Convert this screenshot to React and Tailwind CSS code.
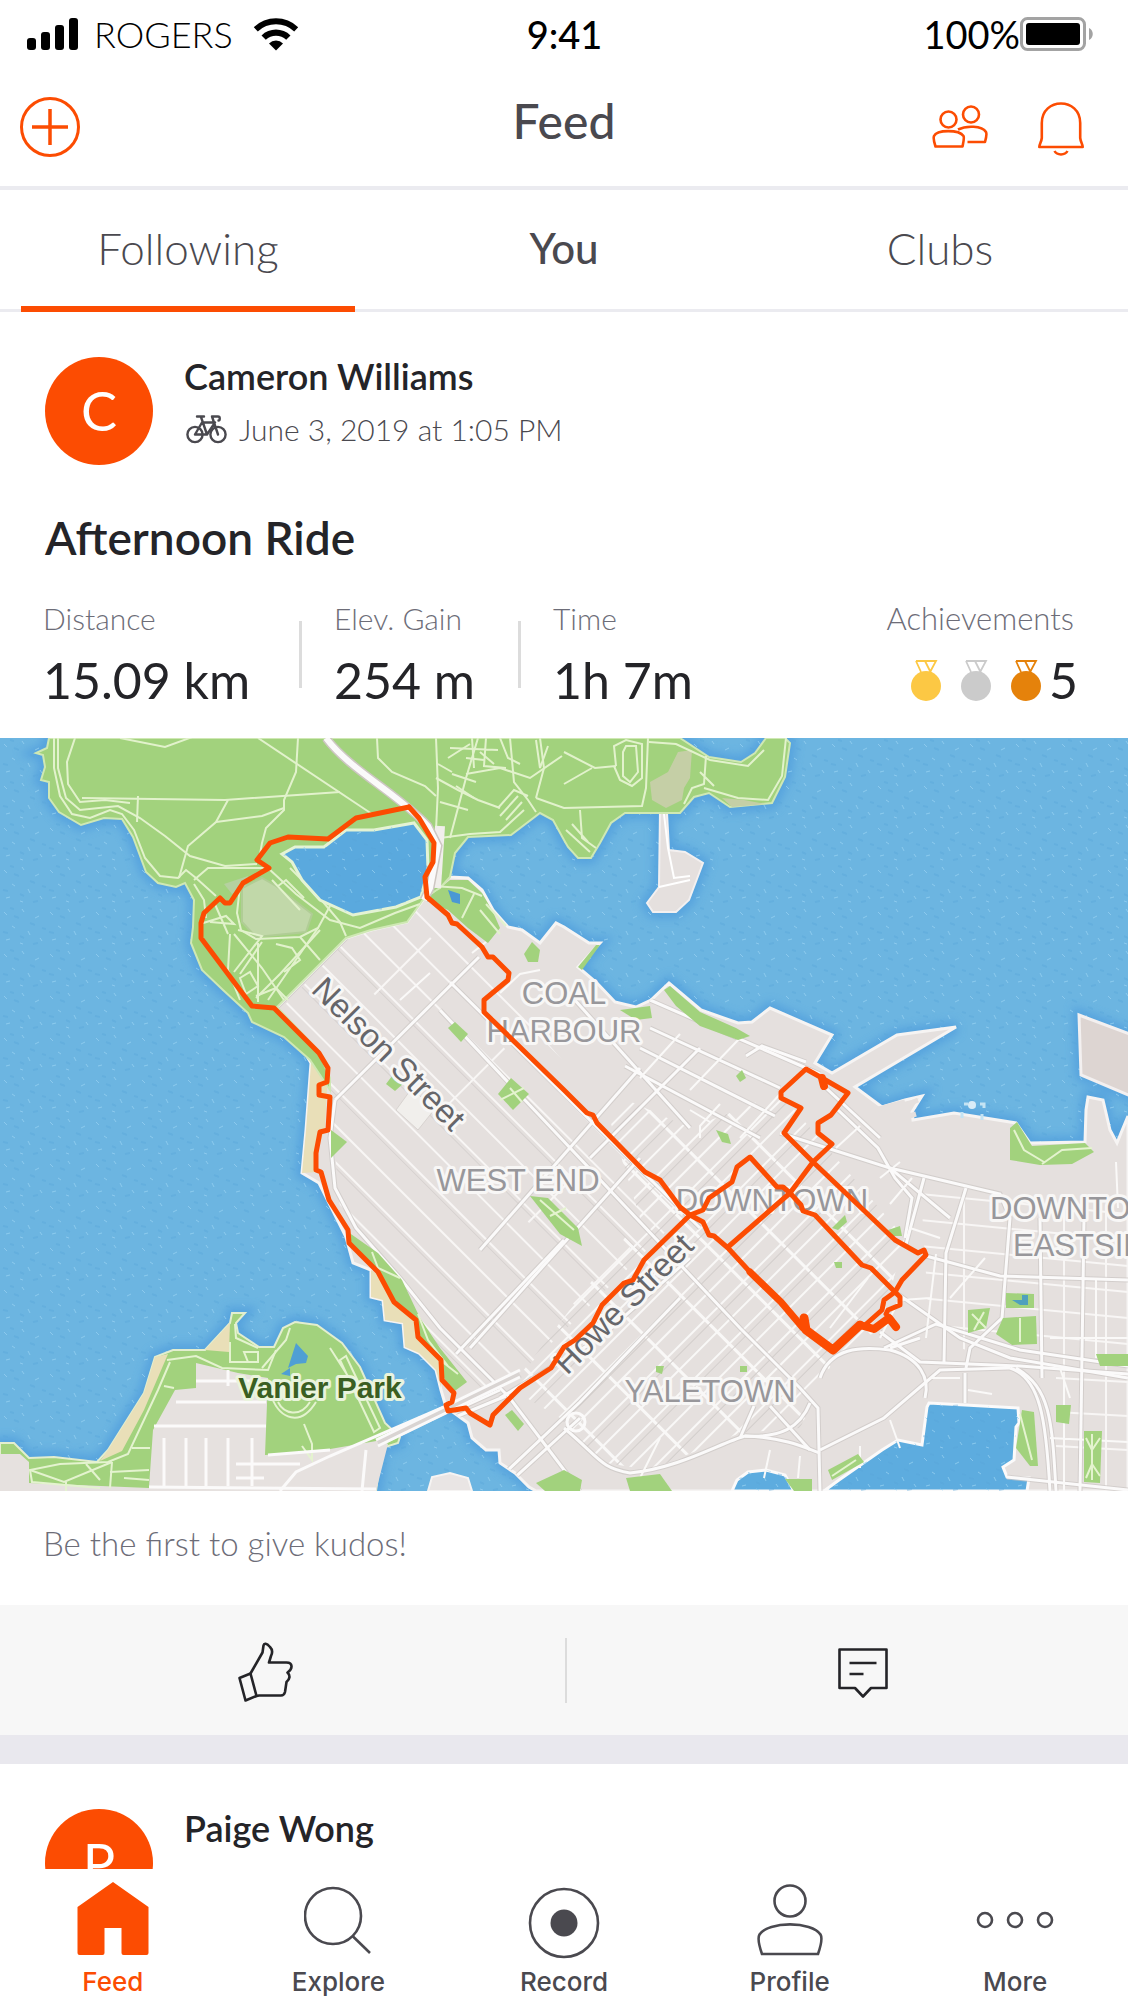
import React from "react";

const LATO = "font-[Lato,'Open_Sans',sans-serif]";
const INTER = "font-[Inter,Roboto,sans-serif]";

/* ---------- map data ---------- */

const DOWNTOWN_LAND =
  "346,200 371,192 407,184 425,159 432,135 450,139 468,140 482,152 493,172 508,189 522,192 540,205 556,185 564,189 589,205 600,205 578,229 597,245 615,264 636,269 651,262 669,245 701,272 738,285 752,284 770,270 832,297 815,325 832,335 897,297 956,289 855,349 882,369 905,362 922,358 912,374 913,382 954,375 1016,385 1030,405 1085,404 1086,372 1088,359 1103,362 1110,392 1117,405 1121,395 1128,378 1128,753 536,753 529,749 515,735 500,725 499,712 486,712 472,700 468,685 446,669 441,652 436,632 419,615 405,609 403,585 385,582 383,562 371,559 371,532 353,525 346,499 331,469 319,445 302,435 306,392 311,325 277,269";

const STANLEY_PARK =
  "M49,0 L47,10 36,15 43,17 45,29 41,42 49,44 49,60 59,74 81,87 104,80 122,81 133,99 139,115 146,134 158,145 176,149 185,145 194,162 193,189 191,205 202,232 223,252 248,275 252,284 284,299 310,322 330,352 330,340 318,312 277,269 346,200 371,192 407,184 425,159 440,150 450,139 455,115 468,99 511,97 540,75 553,82 564,102 568,109 578,120 591,120 600,105 611,85 625,75 680,75 694,59 709,55 730,69 772,65 785,39 790,5 785,0 766,0 755,15 741,24 709,19 680,0Z";

const LAGOON =
  "M282,116 L295,109 324,109 346,92 374,92 414,85 427,102 428,132 421,159 396,169 353,177 320,162 302,142 292,124Z";

const PIER_ISLAND =
  "660,72 667,75 669,112 685,114 703,125 689,162 676,174 653,174 647,165 659,149";

const VANIER_LAND =
  "M0,705 L14,705 29,720 54,719 97,724 108,712 144,655 155,619 173,612 205,612 230,585 232,575 245,575 236,585 238,595 259,609 274,609 283,590 295,584 317,587 342,605 360,629 385,685 400,699 398,705 382,710 376,753 0,753Z";

const FALSE_CREEK = [
  "M732,753 L737,742 748,734 766,732 785,737 794,753Z",
  "M824,753 L839,742 882,712 898,702 922,707 927,669 929,665 965,667 1018,670 1019,685 1016,689 1014,722 1003,729 1007,739 1029,740 1027,753Z",
];

const GREENS = [
  "425,162 450,142 468,142 482,155 493,174 500,190 488,205 468,190 448,172",
  "524,216 532,204 540,212 538,224 528,224",
  "578,229 596,207 600,207 582,232",
  "664,252 670,248 700,274 736,290 750,298 738,302 700,288 676,268",
  "620,272 650,268 652,280 636,282",
  "448,290 455,284 468,296 461,304",
  "498,356 511,340 529,356 513,372",
  "386,346 392,338 404,345 395,353",
  "530,458 548,460 578,490 582,508 560,496",
  "331,392 347,404 331,420",
  "348,494 378,515 402,542 420,580 440,610 467,644 452,655 443,638 441,620 418,597 414,582 394,564 378,534 350,506",
  "505,677 512,672 524,686 518,693",
  "832,490 845,477 847,484 838,492",
  "716,392 728,396 731,406 722,404",
  "1010,390 1017,384 1032,408 1085,405 1094,414 1072,426 1040,427 1010,422",
  "968,572 990,570 986,590 968,595",
  "1006,555 1034,556 1034,570 1006,570",
  "1003,580 1036,578 1037,606 1012,607 996,596",
  "1056,667 1071,667 1069,686 1056,684",
  "1022,672 1034,674 1038,728 1030,728 1016,710",
  "1084,693 1102,693 1100,745 1084,744",
  "828,732 858,716 864,724 832,742",
  "626,740 660,736 672,753 630,753",
  "785,741 812,741 812,753 794,753",
  "536,745 564,732 582,742 580,753 545,753",
  "656,628 664,628 662,636 656,634",
  "740,628 747,628 747,634 740,634",
  "1096,616 1128,616 1128,628 1100,628",
  "736,338 742,332 746,340 740,344",
  "888,492 900,488 902,498 892,498",
  "834,524 842,524 842,530 836,530",
];

const BEACHES = [
  "311,325 319,333 327,350 325,390 317,414 317,434 302,435 306,392",
  "371,532 378,537 394,566 416,584 418,600 440,624 441,650 436,632 419,615 405,609 403,585 385,582 383,562 371,559",
  "155,619 168,616 144,672 122,713 100,723 108,712 144,655",
  "205,612 230,585 229,614",
];

const TRAILS = [
  "M54,0 L54,30 60,58 72,76 90,80 110,72 122,76 134,92 145,120 160,138 178,140 186,132 196,140 216,158",
  "M58,0 L58,30 66,60 80,72 118,68 140,80 165,98 190,118 225,128 257,126",
  "M75,0 L67,24 68,46 80,64 105,62 130,65",
  "M82,60 L225,62 340,54",
  "M138,58 L137,84",
  "M228,62 L216,84 188,108 179,140",
  "M258,0 L372,76",
  "M298,0 L296,34 284,62 284,72 266,90 262,105 259,122",
  "M216,84 L262,78 284,70",
  "M120,0 L165,9 195,-2",
  "M194,142 L208,130 268,130",
  "M194,146 L204,162 206,180",
  "M240,148 L237,175 241,192 256,201 300,199 318,190 330,168",
  "M268,130 L296,156 330,182 360,190 395,175 420,166",
  "M272,142 L300,172 M278,148 L286,142 304,160",
  "M290,130 L318,158 340,184 346,198",
  "M200,186 L226,178 234,186 210,184 M214,164 L228,196",
  "M230,196 L228,232 240,262 M234,196 L262,230 284,262",
  "M238,192 L262,198 234,234 M262,204 L240,236",
  "M258,205 L258,264 M300,199 L320,222 M320,192 L280,236 256,260",
  "M318,190 L268,262 M276,206 L292,210 300,222 284,234",
  "M240,240 L250,234 258,248 246,256Z",
  "M256,258 L276,250 288,262",
  "M377,0 L378,20 392,34 425,48 436,58",
  "M436,0 L438,50 436,92 M448,20 L470,6 M438,26 L452,34",
  "M450,100 L466,40 478,0 M466,36 L500,30 530,40 562,18",
  "M436,40 L458,52 478,62 500,70 M440,64 L468,72",
  "M450,10 L498,12 M486,0 L484,28 506,30 M500,0 L508,20 520,26",
  "M472,0 L474,30 M480,14 L494,26 M452,36 L476,44 M456,48 L474,60 M466,20 L484,22",
  "M510,0 L514,44 528,62 536,74 M498,70 L514,52 528,58",
  "M500,78 L518,58 M506,82 L522,64 M536,2 L540,30 548,8",
  "M440,100 L470,96 500,94 524,72 M536,60 L544,30 540,0",
  "M564,14 L595,30 616,28 M564,46 L592,30",
  "M616,28 L614,8 626,2 642,6 642,40 632,48 620,42 614,28",
  "M626,8 L636,8 638,34 630,44 623,38 623,14Z",
  "M648,0 L646,50 642,68 564,70 536,60",
  "M649,4 L676,6 710,22 748,28 764,12",
  "M684,66 L692,50 704,46 706,18 M700,34 L714,48 M704,50 L738,60 768,62 782,38 786,0",
  "M580,72 L582,100 596,110 M566,92 L590,114 M572,86 L588,104",
  "M433,148 L462,150 482,158 M462,180 L474,156 M480,172 L500,196 M486,166 L506,188",
];

const VANIER_PATHS = [
  "M167,622 L196,618 222,630 268,632 276,612",
  "M170,624 L158,652 128,716 108,724 60,726 30,732 32,744 100,750",
  "M235,586 L236,600 258,610 M230,604 L230,624 258,624",
  "M244,614 L258,614 258,624 248,624Z",
  "M262,630 L286,602 290,590",
  "M340,622 L346,618 380,690 374,694Z M330,610 L362,660",
  "M272,660 C280,680 300,690 316,664 M278,664 C284,676 300,680 310,664",
  "M304,686 L312,706 312,722 302,708",
  "M30,732 L64,744 112,724 M66,744 L66,753 M112,724 L110,750 M86,726 L100,742",
  "M110,734 L149,732 M124,740 L149,742 M132,710 L150,710 M164,648 L174,650",
];

const VANIER_STREETS = [
  "M196,643 H264 M176,664 H266 M154,688 H266",
  "M164,700 V748 M186,700 V748 M206,700 V748 M228,700 V748 M252,700 V748 M228,632 V648",
  "M149,749 L376,751 M236,726 H300 M236,740 H264 M268,717 L330,712",
  "M280,753 L296,734 330,718 520,636 M366,712 L362,753",
];

const MAIN_STREETS = [
  "M479,219 L335,362", "M335,362 L330,400 335,450 356,490 400,540 440,590 506,656",
  "M640,330 L480,512", "M564,502 L456,616", "M640,420 L470,610",
  "M700,310 L590,420", "M346,200 L277,269",
  "M440,272 L740,590 800,650 818,670 820,753",
  "M450,244 L600,392 700,490", "M564,250 L690,390",
  "M650,290 L780,350", "M640,310 L775,378", "M625,328 L760,400",
  "M650,262 L820,336", "M746,318 L762,308 806,324",
  "M500,660 L600,600 690,520",
  "M382,706 L500,652 M376,712 L506,658",
  "M486,753 L580,664 680,560", "M500,753 L580,680 M506,655 L580,753",
  "M564,690 C600,720 600,730 630,735 C680,730 720,705 745,698 C790,700 810,712 820,715",
  "M745,698 C780,700 800,690 810,665", "M770,668 L810,712", "M754,668 L740,700",
  "M820,712 L884,680 940,632 1010,630",
  "M820,640 C830,610 860,608 890,612 C920,620 930,640 925,660",
  "M880,594 L920,624 1020,628 1128,636", "M884,610 L936,586 1020,612 1128,628",
  "M895,554 L960,600 1010,620 1128,640",
  "M890,430 L1000,456 1010,480 1002,580 970,610 966,630",
  "M926,518 L1000,538 1128,542", "M920,600 L890,610",
  "M780,395 L890,430 950,480", "M1010,630 C1040,640 1046,680 1050,753",
  "M1016,630 C1050,650 1052,680 1056,753", "M1084,480 L1080,753", "M1040,480 L1042,640",
  "M838,372 L878,410 895,440 912,460 905,500",
  "M924,440 L905,510 M966,450 L946,515 944,625",
  "M826,350 L880,400", "M1007,739 L1128,752", "M965,635 L965,665",
];

const SIDE_STREETS = [
  "M740,300 L690,352 M790,345 L740,400 M680,296 L640,340 M720,366 L700,388 700,400 M710,384 L690,372",
  "M900,424 L880,440 M912,440 L890,466 M860,388 L836,410 M900,560 L880,600 M910,490 L940,500",
  "M936,516 L926,600 M985,520 L950,560 M902,562 L930,560 M868,540 L830,590",
  "M890,682 L900,710 M930,640 L960,640 M1060,630 L1070,660 M968,652 L992,656",
  "M770,712 L764,740 M800,718 L798,740 M860,708 L860,730 M640,740 L660,700",
  "M1064,640 V753 M1050,600 H1128 M1050,700 L1128,704 M1096,542 V620 M1116,424 L1118,470",
  "M430,235 L400,262 M500,255 L520,236 540,232 M472,215 L486,204",
];

const ROUTE_MAIN =
  "M409,69 L356,80 328,101 288,99 270,105 257,122 269,130 243,145 230,165 225,165 220,160 204,175 201,185 201,200 252,268 274,270 319,315 328,330 327,344 319,347 319,357 330,359 328,392 320,394 316,415 316,432 321,434 329,462 348,492 349,505 378,534 394,564 416,582 418,599 441,622 442,642 454,655 452,664 446,667 448,673 466,670 470,675 490,687 493,677 520,650 551,630 564,609 575,602 593,585 602,567 624,545 633,542 644,522 690,477 703,472 709,460 732,444 737,429 750,419 777,449 783,449 790,455 801,467 803,473 815,477 862,527 871,530 895,554 900,559 900,567 888,572 886,576";
const ROUTE_EAST =
  "M409,69 L419,80 434,105 433,124 425,139 427,159 448,177 452,185 457,186 482,209 488,219 493,219 509,235 508,242 484,262 484,274 564,352 587,375 593,377 597,385 645,434 660,442 680,469 690,477 703,484 709,497 714,498 728,510 750,534 781,564 803,590";
const ROUTE_LOOP =
  "M895,554 L902,542 926,517 924,512 918,515 895,502 813,424 784,395 801,370 781,360 781,354 806,331 822,340 848,355 831,377 818,385 818,395 832,406 813,424 790,455 728,509 M895,554 L884,562 882,572 864,588";

const AREA_LABELS = [
  { text: "COAL", x: 564, y: 266, anchor: "middle" },
  { text: "HARBOUR", x: 564, y: 304, anchor: "middle" },
  { text: "WEST END", x: 518, y: 453, anchor: "middle" },
  { text: "DOWNTOWN", x: 772, y: 473, anchor: "middle" },
  { text: "YALETOWN", x: 710, y: 664, anchor: "middle" },
  { text: "DOWNTOWN", x: 990, y: 481, anchor: "start" },
  { text: "EASTSIDE", x: 1013, y: 518, anchor: "start" },
];

const range = (from, to, step) => {
  const out = [];
  for (let v = from; v <= to; v += step) out.push(v);
  return out;
};

function RideMap() {
  return (
    <svg
      viewBox="0 0 1128 753"
      className="block h-auto w-full"
      role="img"
      aria-label="Map of the ride through downtown Vancouver"
    >
      <defs>
        <clipPath id="land"><polygon points={DOWNTOWN_LAND} /></clipPath>
        <clipPath id="west-end">
          <polygon points="346,203 425,165 480,212 500,250 690,470 500,655 450,655 400,545 340,470 330,360 280,272" />
        </clipPath>
        <clipPath id="core">
          <polygon points="690,390 780,355 905,500 880,590 832,625 800,690 740,695 650,732 600,724 560,680 510,650 640,480 600,350" />
        </clipPath>
        <clipPath id="east">
          <polygon points="920,440 1128,470 1128,753 1060,753 1050,640 930,600" />
        </clipPath>
        <pattern id="ripples" width="46" height="42" patternUnits="userSpaceOnUse">
          <path d="M4,6 l3,3 M22,3 l2,3 M35,12 l4,-2 M12,20 l3,2 M28,25 l2,4 M6,34 l4,-1 M40,32 l2,3 M20,37 l3,1" stroke="#93cff0" strokeWidth="1" opacity="0.8" />
          <path d="M14,10 l5,2 M30,17 l5,2 M3,26 l5,1 M33,38 l5,-1 M10,2 l4,1 M42,22 l4,1 M20,30 l4,2" stroke="#57a5d8" strokeWidth="2" opacity="0.4" />
        </pattern>
        <filter id="shore" x="-5%" y="-5%" width="110%" height="110%">
          <feGaussianBlur stdDeviation="5" />
        </filter>
      </defs>

      <rect width="1128" height="753" fill="#6cb5e1" />

      {/* darker water along the shore */}
      <g filter="url(#shore)" fill="none" stroke="#4a98dc" strokeWidth="12" opacity="0.65">
        <polygon points={DOWNTOWN_LAND} />
        <path d={STANLEY_PARK} />
        <path d={VANIER_LAND} />
        <polygon points={PIER_ISLAND} />
        <polygon points="1079,277 1140,300 1140,362 1081,337" />
      </g>
      <rect width="1128" height="753" fill="url(#ripples)" />

      {/* land */}
      <polygon points={DOWNTOWN_LAND} fill="#e5e0de" stroke="#f6f4f3" strokeWidth="3" />
      <polygon points={PIER_ISLAND} fill="#e5e0de" stroke="#f3f0f0" strokeWidth="2" />
      <path d="M664,76 L668,110 674,140 690,138 M659,149 L690,142" fill="none" stroke="#fff" strokeWidth="2" />
      <polygon points="1079,277 1140,300 1140,362 1081,337" fill="#ddd5d2" stroke="#f3f0f0" strokeWidth="3" />
      <polygon points="428,753 432,739 450,735 468,740 472,753" fill="#e9e5e4" stroke="#f6f4f3" strokeWidth="2" />
      {FALSE_CREEK.map((d) => (
        <g key={d}>
          <path d={d} fill="#5dacdf" stroke="#fbfafa" strokeWidth="3" />
          <path d={d} fill="url(#ripples)" />
        </g>
      ))}

      {/* street grids */}
      <g clipPath="url(#west-end)">
        <g transform="translate(346 200) rotate(45)" stroke="#f8f6f5" strokeWidth="2">
          {range(-120, 330, 26).map((v) => <line key={v} x1="-40" y1={v} x2="620" y2={v} />)}
          {range(10, 320, 52).map((v) => <line key={v} x1="-40" y1={v + 4} x2="620" y2={v + 4} stroke="#d6d1cf" strokeWidth="1" />)}
          {[60, 190, 330, 420].map((u, i) => <line key={u} x1={u} y1={i * 26 - 60} x2={u} y2={i * 26 + 20} />)}
        </g>
      </g>
      <g clipPath="url(#core)">
        <g transform="translate(346 200) rotate(45)" stroke="#f9f8f7" strokeWidth="2">
          {range(-200, 340, 54).map((v) => <line key={v} x1="200" y1={v} x2="820" y2={v} strokeWidth="3" />)}
          {range(320, 800, 17).map((u) => <line key={u} x1={u} y1="-260" x2={u} y2="360" />)}
          {range(326, 800, 34).map((u) => <line key={u} x1={u} y1="-260" x2={u} y2="360" stroke="#d3cecc" strokeWidth="1" />)}
        </g>
      </g>
      <g clipPath="url(#east)" stroke="#f8f6f5" strokeWidth="2">
        {range(440, 600, 26).map((y) => <line key={y} x1="900" y1={y - 12} x2="1128" y2={y + 10} />)}
        {[964, 1064, 1106].map((x) => <line key={x} x1={x} y1="440" x2={x} y2="753" />)}
        {range(640, 740, 34).map((y) => <line key={y} x1="1056" y1={y} x2="1128" y2={y + 4} />)}
      </g>
      <g clipPath="url(#land)" fill="none" stroke="#cbc6c4" strokeWidth="5" opacity="0.7">
        {MAIN_STREETS.map((d) => <path key={d} d={d} />)}
      </g>
      <g clipPath="url(#land)" fill="none" stroke="#fbfafa" strokeWidth="3">
        {MAIN_STREETS.map((d) => <path key={d} d={d} />)}
        <circle cx="576" cy="684" r="9" />
      </g>
      <g clipPath="url(#land)" fill="none" stroke="#faf9f8" strokeWidth="2">
        {SIDE_STREETS.map((d) => <path key={d} d={d} />)}
      </g>
      <path d="M396,372 L412,350 434,372 418,392Z" fill="#f1efec" stroke="#d8d3d0" strokeWidth="1" />

      {/* parks and beaches */}
      {BEACHES.slice(0, 2).map((p) => <polygon key={p} points={p} fill="#e9dfb8" />)}
      {GREENS.map((p) => <polygon key={p} points={p} fill="#a2d27d" />)}
      <g fill="none" stroke="#e4f3cf" strokeWidth="2">
        <path d="M1014,392 L1024,412 1044,424 M1042,426 L1062,412 1092,410 M500,362 L524,350 M510,350 L522,364 M540,462 L574,492 M550,478 L566,470" />
        <path d="M1020,580 V604 M1020,676 L1032,722 M1092,696 V742 M1086,700 L1092,712 1100,700 M1086,740 L1092,726 1100,738 M832,738 L856,722 M972,576 L986,590 M974,592 L984,574" />
        <path d="M372,514 L378,530 400,540 M418,576 L428,602 448,628 M440,622 L458,636" />
      </g>
      <path d="M1012,562 h10 v-5 h6 v10 h-8Z" fill="#4fa0bd" />
      <path d={STANLEY_PARK} fill="#a2d27d" stroke="#cfe8b4" strokeWidth="2" />
      <path d="M652,62 L650,44 668,34 678,14 692,12 690,40 684,50 682,62 666,70Z" fill="#c5cfa6" />
      <path d="M242,150 L262,140 276,148 312,176 306,194 256,199 242,184Z" fill="#c1d8a9" stroke="#b0cd95" strokeWidth="2" />
      <path d="M224,146 L248,138 246,148 232,156Z" fill="#b5d0a0" />
      <path d="M722,60 L744,62 766,66 732,69Z" fill="#c5cfa6" />
      <g fill="none" stroke="#e2f2cc" strokeWidth="2">
        {TRAILS.map((d) => <path key={d} d={d} />)}
      </g>
      <path d={LAGOON} fill="#5aa9de" stroke="#e4f3d4" strokeWidth="3" />
      <path d={LAGOON} fill="url(#ripples)" />
      <path d="M448,152 L460,156 460,166 452,164Z" fill="#4a98d4" />
      <path d="M440,88 L436,150" fill="none" stroke="#f1eeec" strokeWidth="10" />
      <path d="M326,0 C350,32 398,56 428,88 L438,108 430,150 424,162" fill="none" stroke="#cdc6c2" strokeWidth="9" />
      <path d="M326,0 C350,32 398,56 428,88 L438,108 430,150 424,162" fill="none" stroke="#fbfafa" strokeWidth="6" />

      {/* Vanier Park */}
      <path d={VANIER_LAND} fill="#a2d27d" stroke="#e3eecf" strokeWidth="2" />
      {BEACHES.slice(2).map((p) => <polygon key={p} points={p} fill="#e9dfb8" />)}
      <path d="M196,625 L238,635 268,640 265,717 313,714 382,702 388,706 376,753 149,753 149,749 153,692 175,652 196,650Z" fill="#e6e1df" />
      <path d="M0,716 L20,716 29,724 29,745 149,750 149,753 0,753Z" fill="#e6e1df" />
      <path d="M288,630 L296,605 308,618 306,625 296,626Z M281,636 L290,630 290,638Z" fill="#4f9fd4" />
      <g fill="none" stroke="#e4f3cf" strokeWidth="2">
        {VANIER_PATHS.map((d) => <path key={d} d={d} />)}
      </g>
      <g fill="none" stroke="#fbfafa" strokeWidth="3">
        {VANIER_STREETS.map((d) => <path key={d} d={d} />)}
        <path d="M378,705 L520,636" stroke="#d9d4d2" strokeWidth="8" />
        <path d="M376,702 L520,632 M378,708 L520,639" />
      </g>

      {/* harbour piers */}
      <path d="M875,372 L905,364 M880,378 L918,362 M890,384 L916,376" stroke="#e5e0de" strokeWidth="5" fill="none" />
      <path d="M964,366 h4 M980,366 h4 v4 M962,374 v6 M982,376 v6" stroke="#c4e3f3" strokeWidth="3" fill="none" />
      <circle cx="972" cy="367" r="4" fill="#d9ecf7" />

      {/* labels */}
      <g
        fontFamily="'Liberation Sans', Arial, sans-serif"
        fontSize="31"
        fill="#98979b"
        stroke="#f8f7f6"
        strokeWidth="6"
        strokeLinejoin="round"
        paintOrder="stroke"
      >
        {AREA_LABELS.map((l) => (
          <text key={`${l.text}-${l.x}`} x={l.x} y={l.y} textAnchor={l.anchor}>{l.text}</text>
        ))}
        <g fill="#66666a" fontSize="33">
          <text transform="translate(310 253) rotate(45)">Nelson Street</text>
          <text transform="translate(567 638) rotate(-45)">Howe Street</text>
        </g>
        <text x="320" y="660" textAnchor="middle" fontSize="30" fontWeight="700" fill="#3a5f22" stroke="#eaf4dd">Vanier Park</text>
      </g>

      {/* recorded route */}
      <g fill="none" stroke="#fc4c02" strokeWidth="5" strokeLinejoin="round" strokeLinecap="round">
        <path d={ROUTE_MAIN} />
        <path d={ROUTE_EAST} />
        <path d={ROUTE_LOOP} />
        <path d="M822,340 L824,348" strokeWidth="8" />
        <path d="M750,534 L781,564 803,590" strokeWidth="7" />
        <path d="M804,580 L806,592 833,612 860,587" strokeWidth="9" />
        <path d="M860,587 L874,591 889,580 896,589" strokeWidth="8" />
      </g>
    </svg>
  );
}

/* ---------- icons ---------- */

function SignalIcon() {
  return (
    <svg width="51" height="32" viewBox="0 0 51 32" aria-hidden="true">
      <rect x="0" y="20" width="9" height="12" rx="3" />
      <rect x="14" y="14" width="9" height="18" rx="3" />
      <rect x="28" y="7" width="9" height="25" rx="3" />
      <rect x="42" y="0" width="9" height="32" rx="3" />
    </svg>
  );
}

function WifiIcon() {
  return (
    <svg width="46" height="33" viewBox="0 0 46 33" aria-hidden="true">
      <path d="M0.8,9.2 A32,32 0 0 1 45.2,9.2 L41.2,13.6 A26,26 0 0 0 4.8,13.6 Z" />
      <path d="M8.5,17.4 A21,21 0 0 1 37.5,17.4 L33.2,21.8 A15,15 0 0 0 12.8,21.8 Z" />
      <path d="M16,25.4 A10,10 0 0 1 30,25.4 L23,32.6 Z" />
    </svg>
  );
}

function BatteryIcon() {
  return (
    <svg width="74" height="34" viewBox="0 0 74 34" aria-hidden="true">
      <rect x="1.5" y="1.5" width="63" height="31" rx="6" fill="none" stroke="#a3a3a3" strokeWidth="3" />
      <rect x="6" y="6" width="54" height="22" rx="3" />
      <path d="M69,11 C74,13 74,21 69,23Z" fill="#a3a3a3" />
    </svg>
  );
}

function PlusCircleIcon() {
  return (
    <svg width="60" height="60" viewBox="0 0 60 60" fill="none" stroke="#fc4c02" strokeWidth="3" aria-hidden="true">
      <circle cx="30" cy="30" r="28.5" />
      <path d="M30,12 V48 M12,30 H48" strokeWidth="3.5" />
    </svg>
  );
}

function PeopleIcon() {
  return (
    <svg width="56" height="44" viewBox="0 0 56 44" fill="none" stroke="#fc4c02" strokeWidth="2.6" strokeLinejoin="round" aria-hidden="true">
      <circle cx="16.5" cy="14.5" r="8" />
      <circle cx="39" cy="9.5" r="8" />
      <path d="M3.5,41.5 C2,37 1.2,33 2,31 C5,24.5 27,24.5 31.5,31 C32.5,33 31.5,37 30.5,41.5 Z" />
      <path d="M26,24.5 C34,20.5 50,20.5 54,27 C55,29 54,33.5 53,37 H35.5" />
    </svg>
  );
}

function BellIcon() {
  return (
    <svg width="46" height="54" viewBox="0 0 46 54" fill="none" stroke="#fc4c02" strokeWidth="2.6" strokeLinejoin="round" aria-hidden="true">
      <path d="M3.8,36 V21 C3.8,-5 42.2,-5 42.2,21 V36 C42.6,40 44.7,42 44.7,45 H1.3 C1.3,42 3.4,40 3.8,36Z" />
      <path d="M16.5,49 C19,53.6 27,53.6 29.5,49" />
    </svg>
  );
}

function BikeIcon() {
  return (
    <svg width="41" height="30" viewBox="0 0 41 30" fill="none" stroke="#4a494f" strokeWidth="2.4" strokeLinejoin="round" strokeLinecap="round" aria-hidden="true">
      <circle cx="9" cy="20.5" r="7.6" />
      <circle cx="32" cy="20.5" r="7.6" />
      <path d="M9,20.5 L16,8.5 H29 M15,3 L21,20.5 H9 M21,20.5 L29,8.5 M11,2.5 H18 M32,20.5 L26,2.5 H32 C34.5,2.5 34,6.5 32.5,6.5" />
    </svg>
  );
}

function MedalIcon({ color }) {
  return (
    <svg width="30" height="41" viewBox="0 0 30 41" aria-hidden="true">
      <path d="M5,1 H25 L18,14 M5,1 L10,12 M14,1 L20,13" fill="none" stroke={color} strokeWidth="1.8" />
      <circle cx="15" cy="26" r="15" fill={color} />
    </svg>
  );
}

function ThumbIcon() {
  return (
    <svg width="55" height="60" viewBox="0 0 55 60" fill="none" stroke="#242428" strokeWidth="2.6" strokeLinejoin="round" aria-hidden="true">
      <path d="M1.5,36 L12.5,31.5 L18.5,54 L7.5,58.5 Z" />
      <path d="M12.5,31.5 L24.5,10.5 L25.5,3.5 C26,1 28.5,1 32,5 C34.5,7.5 34.5,11 33,14 L31,20.5 H48.5 C55,20.5 55,27 49.5,30.5 C52.5,33.5 52,37 48.5,40 L47,50 C46.5,52 45,53.5 43,53.5 H21 L18.5,54" />
    </svg>
  );
}

function CommentIcon() {
  return (
    <svg width="50" height="50" viewBox="0 0 50 50" fill="none" stroke="#242428" strokeWidth="2.6" strokeLinejoin="round" aria-hidden="true">
      <path d="M1.5,1.5 H48.5 V40 H33 L25,48.5 L17,40 H1.5 Z" />
      <path d="M11.5,15 H38.5 M11.5,26 H25.5" />
    </svg>
  );
}

function HomeIcon() {
  return (
    <svg width="72" height="76" viewBox="0 0 72 76" fill="#fc4c02" aria-hidden="true">
      <path d="M36,1 L71.5,26 V72 Q71.5,74 69.5,74 H46.5 Q44.5,74 44.5,72 V47 H27.5 V72 Q27.5,74 25.5,74 H2.5 Q0.5,74 0.5,72 V26 Z" />
    </svg>
  );
}

function SearchIcon() {
  return (
    <svg width="68" height="76" viewBox="0 0 68 76" fill="none" stroke="#4a494f" strokeWidth="2.6" aria-hidden="true">
      <circle cx="29" cy="35" r="28" />
      <path d="M48.5,55 L66,72" />
    </svg>
  );
}

function RecordIcon() {
  return (
    <svg width="72" height="78" viewBox="0 0 72 78" fill="none" stroke="#4a494f" strokeWidth="2.6" aria-hidden="true">
      <circle cx="36" cy="42" r="34" />
      <circle cx="36" cy="42" r="13.5" fill="#4a494f" stroke="none" />
    </svg>
  );
}

function ProfileIcon() {
  return (
    <svg width="68" height="76" viewBox="0 0 68 76" fill="none" stroke="#4a494f" strokeWidth="2.6" aria-hidden="true">
      <circle cx="34" cy="20" r="15.5" />
      <path d="M6,73 C2.5,63 1.5,57 3.5,53.5 C12,40 56,40 64.5,53.5 C66.5,57 65.5,63 62,73 Z" />
    </svg>
  );
}

function MoreIcon() {
  return (
    <svg width="78" height="76" viewBox="0 0 78 76" fill="none" stroke="#4a494f" strokeWidth="2.6" aria-hidden="true">
      <circle cx="9" cy="39" r="7" />
      <circle cx="39" cy="39" r="7" />
      <circle cx="69" cy="39" r="7" />
    </svg>
  );
}

/* ---------- sections ---------- */

function StatusBar() {
  return (
    <div className="grid h-[68px] grid-cols-3 items-center pl-[27px] pr-[34px] text-[36px] leading-[48px] text-black">
      <div className="flex items-center">
        <SignalIcon />
        <span className="ml-4 mr-5 font-light">ROGERS</span>
        <WifiIcon />
      </div>
      <span className="pl-2 text-center text-[38px] font-medium">9:41</span>
      <div className="flex items-center justify-end">
        <span className="text-[38px]">100%</span>
        <BatteryIcon />
      </div>
    </div>
  );
}

function Header() {
  return (
    <header className="grid h-[122px] grid-cols-3 items-center border-b-4 border-[#ebebf0] px-5">
      <div className="flex">
        <button type="button" aria-label="Add"><PlusCircleIcon /></button>
      </div>
      <h1 className="pb-3 text-center text-[48px] leading-[56px] font-medium text-[#4a494f]">Feed</h1>
      <div className="flex items-center justify-end gap-[50px] pr-6">
        <button type="button" aria-label="Find friends"><PeopleIcon /></button>
        <button type="button" aria-label="Notifications" className="pt-1"><BellIcon /></button>
      </div>
    </header>
  );
}

function Tabs() {
  const tabs = ["Following", "You", "Clubs"];
  return (
    <div role="tablist" className="grid h-[122px] grid-cols-3 border-b-[3px] border-[#ebebf0]">
      {tabs.map((tab, i) => (
        <button
          key={tab}
          type="button"
          role="tab"
          aria-selected={i === 0}
          className={`relative pb-1 leading-[56px] text-[#4a494f] ${i === 1 ? "text-[42px] font-medium" : "text-[44px] font-light"}`}
        >
          {tab}
          {i === 0 && <span className="absolute inset-x-[21px] -bottom-[3px] h-1.5 bg-[#fc4c02]" />}
        </button>
      ))}
    </div>
  );
}

function PostAuthor({ initial, name, date }) {
  return (
    <div className="flex items-start gap-[31px] px-[45px] pt-[45px]">
      <div className="flex size-[108px] shrink-0 items-center justify-center rounded-full bg-[#fc4c02] text-[54px] leading-none text-white">
        {initial}
      </div>
      <div>
        <h2 className="text-[36px] leading-[38px] font-semibold text-[#242428]">{name}</h2>
        {date && (
          <p className="mt-3.5 flex items-center gap-3 pl-0.5 text-[30px] leading-[40px] font-light text-[#4a494f]">
            <BikeIcon />
            {date}
          </p>
        )}
      </div>
    </div>
  );
}

function Stat({ label, value, className }) {
  return (
    <div className={className}>
      <dt className="text-[30px] leading-[40px] font-light text-[#6d6d78]">{label}</dt>
      <dd className="mt-3 text-[50px] leading-[60px] text-[#242428]">{value}</dd>
    </div>
  );
}

function StatDivider() {
  return <div aria-hidden="true" className="mr-8 h-[67px] w-[3px] shrink-0 bg-[#dcdcdc]" />;
}

function RidePost() {
  return (
    <article>
      <PostAuthor initial="C" name="Cameron Williams" date="June 3, 2019 at 1:05 PM" />
      <h3 className="mt-[45px] px-[45px] text-[46px] leading-[56px] font-semibold text-[#242428]">Afternoon Ride</h3>
      <div className="mt-8 flex items-center pb-7 pl-[43px] pr-[50px]">
        <dl className="flex items-center">
          <Stat label="Distance" value="15.09 km" className="w-[256px]" />
          <StatDivider />
          <Stat label="Elev. Gain" value="254 m" className="w-[184px]" />
          <StatDivider />
          <Stat label="Time" value="1h 7m" />
        </dl>
        <dl className="ml-auto flex flex-col items-end">
          <dt className="pr-1 text-[31px] leading-[40px] font-light text-[#6d6d78]">Achievements</dt>
          <dd className="mt-3 flex items-center gap-5 text-[50px] leading-[60px] text-[#242428]">
            <MedalIcon color="#fcc844" />
            <MedalIcon color="#cbcbcb" />
            <span className="flex items-center gap-2">
              <MedalIcon color="#e5820b" />5
            </span>
          </dd>
        </dl>
      </div>
      <RideMap />
      <p className="px-[43px] pt-8 pb-[42px] text-[33px] leading-[40px] font-light text-[#6d6d78]">
        Be the first to give kudos!
      </p>
      <div className="flex h-[130px] items-center bg-[#f7f7f7]">
        <button type="button" aria-label="Give kudos" className="flex flex-1 justify-center pt-1 pr-[34px]">
          <ThumbIcon />
        </button>
        <div aria-hidden="true" className="h-[65px] w-0.5 bg-[#dcdcdc]" />
        <button type="button" aria-label="Comment" className="flex flex-1 justify-center pt-1.5 pl-[30px]">
          <CommentIcon />
        </button>
      </div>
    </article>
  );
}

function TabBar() {
  const items = [
    { label: "Feed", icon: <HomeIcon />, style: "text-[#fc4c02]" },
    { label: "Explore", icon: <SearchIcon />, style: "text-[#4a494f]" },
    { label: "Record", icon: <RecordIcon />, style: "text-[#4a494f]" },
    { label: "Profile", icon: <ProfileIcon />, style: "text-[#4a494f]" },
    { label: "More", icon: <MoreIcon />, style: "text-[#4a494f]" },
  ];
  return (
    <nav className="grid shrink-0 grid-cols-5 bg-white pt-3 pb-1">
      {items.map((item) => (
        <a key={item.label} href="#" className={`flex flex-col items-center gap-2 font-medium ${item.style}`}>
          <span className="flex h-[78px] items-start">{item.icon}</span>
          <span className={`text-[26px] leading-[30px] ${INTER}`}>{item.label}</span>
        </a>
      ))}
    </nav>
  );
}

export default function App() {
  return (
    <div className={`flex h-screen flex-col bg-white ${LATO}`}>
      <StatusBar />
      <Header />
      <Tabs />
      <main className="min-h-0 flex-1 overflow-y-auto [scrollbar-width:none]">
        <RidePost />
        <div aria-hidden="true" className="h-[29px] bg-[#e9e8ee]" />
        <article>
          <PostAuthor initial="P" name="Paige Wong" />
        </article>
      </main>
      <TabBar />
    </div>
  );
}
